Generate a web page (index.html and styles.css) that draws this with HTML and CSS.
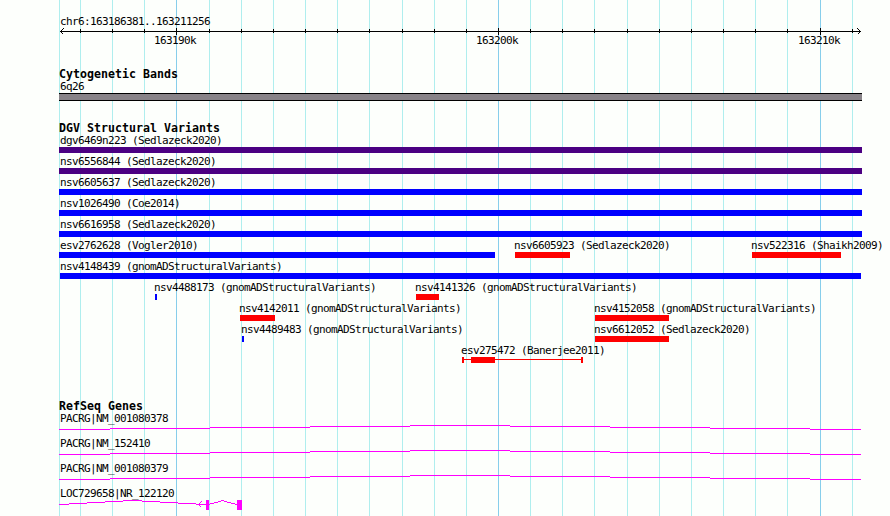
FILE: index.html
```html
<!DOCTYPE html>
<html lang="en">
<head>
  <meta charset="UTF-8">
  <title>chr6:163186381..163211256</title>
  <link rel="stylesheet" href="styles.css">
</head>
<body>

<div class="browser">

  <!-- Grid lines, one per kb -->
  <svg class="gridlines" width="890" height="516">
    <path class="minor" d="M59.5 0V516M80.5 0V516M112.5 0V516M144.5 0V516M209.5 0V516M241.5 0V516M273.5 0V516M305.5 0V516M337.5 0V516M369.5 0V516M402.5 0V516M434.5 0V516M466.5 0V516M530.5 0V516M562.5 0V516M594.5 0V516M627.5 0V516M659.5 0V516M691.5 0V516M723.5 0V516M755.5 0V516M787.5 0V516M852.5 0V516"/>
    <path class="major" d="M176.5 0V516M498.5 0V516M820.5 0V516"/>
  </svg>

  <main class="tracks">

    <!-- Scale -->
    <section class="scale">
      <div class="label first">chr6:163186381..163211256</div>
      <svg class="axis" width="890" height="7">
        <path d="M60 3.5H861M80.5 1V5M112.5 1V5M144.5 1V5M209.5 1V5M241.5 1V5M273.5 1V5M305.5 1V5M337.5 1V5M369.5 1V5M402.5 1V5M434.5 1V5M466.5 1V5M530.5 1V5M562.5 1V5M594.5 1V5M627.5 1V5M659.5 1V5M691.5 1V5M723.5 1V5M755.5 1V5M787.5 1V5M852.5 1V5"/>
        <path d="M176.5 0V7M498.5 0V7M820.5 0V7"/>
        <path d="M63.5 .5L60.5 3.5L63.5 6.5M857.5 .5L860.5 3.5L857.5 6.5"/>
      </svg>
      <div class="row ticks">
        <span class="label feature" style="--start: 155">163190k</span>
        <span class="label feature" style="--start: 477">163200k</span>
        <span class="label feature" style="--start: 799">163210k</span>
      </div>
    </section>

    <!-- Cytogenetic bands -->
    <section class="bands">
      <h2>Cytogenetic Bands</h2>
      <div class="label first">6q26</div>
      <div class="band"></div>
    </section>

    <!-- Structural variants -->
    <section class="variants">
      <h2>DGV Structural Variants</h2>
      <div class="row">
        <div class="feature full complex" style="--start: 59; --len: 803"><span class="label">dgv6469n223 (Sedlazeck2020)</span><i class="bar"></i></div>
      </div>
      <div class="row">
        <div class="feature full complex" style="--start: 59; --len: 803"><span class="label">nsv6556844 (Sedlazeck2020)</span><i class="bar"></i></div>
      </div>
      <div class="row">
        <div class="feature full gain" style="--start: 59; --len: 803"><span class="label">nsv6605637 (Sedlazeck2020)</span><i class="bar"></i></div>
      </div>
      <div class="row">
        <div class="feature full gain" style="--start: 59; --len: 803"><span class="label">nsv1026490 (Coe2014)</span><i class="bar"></i></div>
      </div>
      <div class="row">
        <div class="feature full gain" style="--start: 59; --len: 803"><span class="label">nsv6616958 (Sedlazeck2020)</span><i class="bar"></i></div>
      </div>
      <div class="row">
        <div class="feature full gain" style="--start: 59; --len: 436"><span class="label">esv2762628 (Vogler2010)</span><i class="bar"></i></div>
        <div class="feature loss" style="--start: 515; --len: 55"><span class="label">nsv6605923 (Sedlazeck2020)</span><i class="bar"></i></div>
        <div class="feature loss" style="--start: 752; --len: 89"><span class="label">nsv522316 (Shaikh2009)</span><i class="bar"></i></div>
      </div>
      <div class="row">
        <div class="feature inside gain" style="--start: 60; --len: 801"><span class="label">nsv4148439 (gnomADStructuralVariants)</span><i class="bar"></i></div>
      </div>
      <div class="row">
        <div class="feature gain" style="--start: 155; --len: 2"><span class="label">nsv4488173 (gnomADStructuralVariants)</span><i class="bar"></i></div>
        <div class="feature loss" style="--start: 416; --len: 23"><span class="label">nsv4141326 (gnomADStructuralVariants)</span><i class="bar"></i></div>
      </div>
      <div class="row">
        <div class="feature loss" style="--start: 240; --len: 35"><span class="label">nsv4142011 (gnomADStructuralVariants)</span><i class="bar"></i></div>
        <div class="feature loss" style="--start: 595; --len: 74"><span class="label">nsv4152058 (gnomADStructuralVariants)</span><i class="bar"></i></div>
      </div>
      <div class="row">
        <div class="feature gain" style="--start: 242; --len: 2"><span class="label">nsv4489483 (gnomADStructuralVariants)</span><i class="bar"></i></div>
        <div class="feature loss" style="--start: 595; --len: 74"><span class="label">nsv6612052 (Sedlazeck2020)</span><i class="bar"></i></div>
      </div>
      <div class="row">
        <div class="feature" style="--start: 462">
          <span class="label">esv275472 (Banerjee2011)</span>
          <svg class="range" width="121" height="6">
            <path d="M0 0H2V6H0ZM2 2H119V3H2ZM119 0H121V6H119ZM9 0H33V6H9Z"/>
          </svg>
        </div>
      </div>
    </section>

    <!-- Genes -->
    <section class="genes">
      <h2>RefSeq Genes</h2>
      <div class="gene">
        <div class="label first">PACRG|NM_001080378</div>
        <svg width="890" height="5"><path d="M59 4.5H110M110 3.5H210M210 2.5H310M310 1.5H410M410 .5H510M510 1.5H610M610 2.5H710M710 3.5H810M810 4.5H861"/></svg>
      </div>
      <div class="gene">
        <div class="label first">PACRG|NM_152410</div>
        <svg width="890" height="5"><path d="M59 4.5H110M110 3.5H210M210 2.5H310M310 1.5H410M410 .5H510M510 1.5H610M610 2.5H710M710 3.5H810M810 4.5H861"/></svg>
      </div>
      <div class="gene">
        <div class="label first">PACRG|NM_001080379</div>
        <svg width="890" height="5"><path d="M59 4.5H110M110 3.5H210M210 2.5H310M310 1.5H410M410 .5H510M510 1.5H610M610 2.5H710M710 3.5H810M810 4.5H861"/></svg>
      </div>
      <div class="gene">
        <div class="label first">LOC729658|NR_122120</div>
        <svg width="890" height="10">
          <path d="M59 4.5H69M69 3.5H87M87 2.5H105M105 1.5H123M123 .5H142M142 1.5H160M160 2.5H178M178 3.5H196M196 4.5H206"/>
          <path d="M209 4.5H210M210 3.5H214M214 2.5H218M218 1.5H221M221 .5H224M224 1.5H227M227 2.5H231M231 3.5H235M235 4.5H237"/>
          <path d="M201.5 1.5L198.5 4.5L201.5 7.5"/>
          <path class="exon" d="M206 0H209V10H206ZM237 0H242V10H237Z"/>
        </svg>
      </div>
    </section>

  </main>
</div>

</body>
</html>
```
FILE: styles.css
```css
body {
  margin: 0;
  background: #fdfffc;
  color: #000;
  font-family: "DejaVu Sans Mono", monospace;
  font-size: 11px;
  line-height: 13px;
}
.browser {
  display: grid;
  width: 890px;
  height: 516px;
  overflow: hidden;
}
.gridlines,
.tracks {
  grid-area: 1 / 1;
}
svg {
  display: block;
  fill: none;
  shape-rendering: crispEdges;
}
.minor {
  stroke: #afeeee;
}
.major {
  stroke: #87ceeb;
}
h2 {
  margin: 0 0 0 59px;
  height: 12px;
  font-size: 11.6px;
  line-height: 13px;
  letter-spacing: 0.02px;
}
.label {
  display: block;
  height: 13px;
  white-space: nowrap;
  letter-spacing: -0.62px;
}
.first {
  margin-left: 60px;
}

/* scale */
.scale {
  padding-top: 15px;
}
.axis {
  stroke: #000;
}
.scale .ticks {
  height: 13px;
  margin-top: -1px;
}

/* features share one cell and are pushed right to their start */
.row {
  display: grid;
  height: 21px;
}
.feature {
  grid-area: 1 / 1;
  width: 0;
  margin-left: calc(var(--start) * 1px);
}
.ticks .label {
  text-indent: -1px;
}
.feature .label {
  margin-left: -1px;
}
.full .label {
  margin-left: 1px;
}
.inside .label {
  margin-left: 0;
}
.bar {
  display: block;
  width: calc(var(--len) * 1px);
  height: 6px;
}
.complex .bar {
  background: #4b0082;
}
.gain .bar {
  background: #0000ff;
}
.loss .bar {
  background: #ff0000;
}
.range {
  fill: #ff0000;
}

/* cytobands */
.bands {
  padding-top: 21px;
}
.band {
  box-sizing: border-box;
  width: 803px;
  height: 8px;
  margin-left: 59px;
  background: #888388;
  border: solid #000;
  border-width: 1px 0;
}
.variants {
  padding-top: 21px;
}

/* genes */
.genes {
  padding-top: 35px;
}
.gene {
  height: 25px;
}
.gene svg {
  stroke: #ff00ff;
}
.gene .exon {
  fill: #ff00ff;
  stroke: none;
}
```
